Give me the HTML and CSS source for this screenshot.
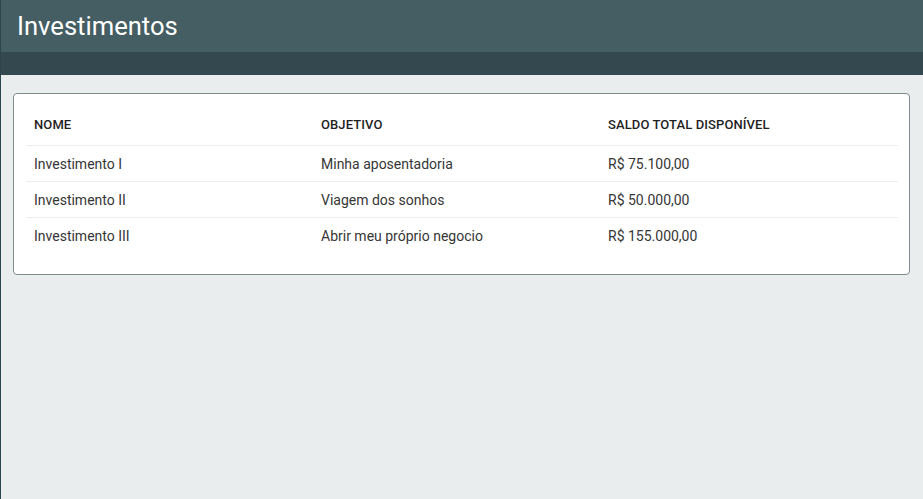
FILE: index.html
```html
<!DOCTYPE html>
<html lang="pt-BR">
<head>
<meta charset="utf-8">
<title>Investimentos</title>
<link rel="stylesheet" href="styles.css">
</head>
<body>
<div class="app">
  <div class="rail"></div>
  <div class="main">
    <header class="topbar">
      <h1 class="title">Investimentos</h1>
    </header>
    <div class="subbar"></div>
    <main class="content">
      <section class="card">
        <div class="table">
          <div class="row head">
            <div class="cell">Nome</div>
            <div class="cell">Objetivo</div>
            <div class="cell">Saldo total disponível</div>
          </div>
          <div class="row">
            <div class="cell">Investimento I</div>
            <div class="cell">Minha aposentadoria</div>
            <div class="cell">R$ 75.100,00</div>
          </div>
          <div class="row">
            <div class="cell">Investimento II</div>
            <div class="cell">Viagem dos sonhos</div>
            <div class="cell">R$ 50.000,00</div>
          </div>
          <div class="row last">
            <div class="cell">Investimento III</div>
            <div class="cell">Abrir meu próprio negocio</div>
            <div class="cell">R$ 155.000,00</div>
          </div>
        </div>
      </section>
    </main>
  </div>
</div>
</body>
</html>
```

FILE: styles.css
```css
* { box-sizing: border-box; }
html, body { margin: 0; padding: 0; height: 100%; }
body {
  font-family: Roboto, "Noto Sans", Arial, sans-serif;
  background: #e9eded;
}
.app {
  display: flex;
  min-height: 100vh;
}
.rail {
  width: 1px;
  background: #2f454b;
  flex: none;
}
.main {
  flex: 1;
  display: flex;
  flex-direction: column;
}
.topbar {
  height: 52px;
  background: #455e63;
  display: flex;
  align-items: center;
  padding-left: 16px;
}
.title {
  margin: 0;
  color: #ffffff;
  font-size: 25.6px;
  font-weight: 400;
  line-height: 1;
  padding-top: 2px;
}
.subbar {
  height: 23px;
  background: #34494f;
}
.content {
  flex: 1;
  padding: 18px 13px 0 12px;
}
.card {
  background: #ffffff;
  border: 1px solid #7f8b8f;
  border-radius: 4px;
  padding: 13px 11px 20px 12px;
}
.table {
  display: flex;
  flex-direction: column;
}
.row {
  display: grid;
  grid-template-columns: 287px 287px 1fr;
  height: 36px;
  align-items: center;
  border-bottom: 1px solid #eeeeee;
  font-size: 14px;
  color: #363636;
}
.row.last { border-bottom: none; }
.row.head {
  height: 39px;
  padding-bottom: 4px;
  font-size: 13px;
  font-weight: 500;
  color: #1f1f1f;
  text-transform: uppercase;
  letter-spacing: 0.1px;
}
.cell {
  padding-left: 8px;
  white-space: nowrap;
}
```
